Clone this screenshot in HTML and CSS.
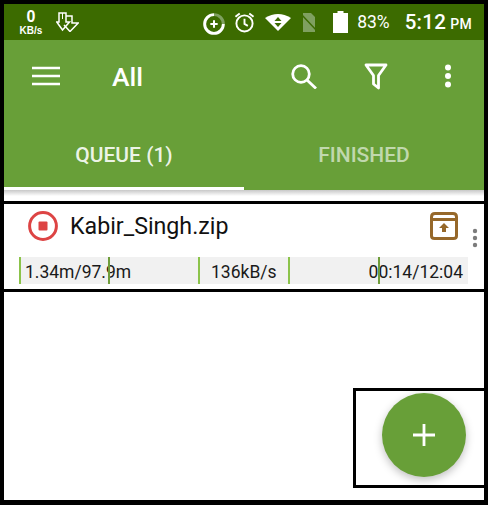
FILE: index.html
```html
<!DOCTYPE html>
<html lang="en">
<head>
<meta charset="utf-8">
<title>Downloads</title>
<link rel="stylesheet" href="styles.css">
</head>
<body>
<div class="frame">
  <header class="status">
    <div class="speed"><b>0</b><small>KB/s</small></div>
    <svg class="ic-dl" viewBox="0 0 23 20"><path d="M3 1h7v9h3.500L6.500 18 .8 10H3z" fill="none" stroke="#fff" stroke-width="1.500"/><path d="M6.500 1v6" stroke="#fff" stroke-width="1"/><path d="M10 4h6v7h6.200L14 19.500 8 13" fill="none" stroke="#fff" stroke-width="1.500"/></svg>
    <div class="status-right">
      <svg class="ic-plus" viewBox="0 0 24 24"><path d="M12 1.800A10.200 10.200 0 0 1 22.200 12" fill="none" stroke="#7fa060" stroke-width="3.200"/><path d="M22.200 12A10.200 10.200 0 1 1 12 1.800" fill="none" stroke="#fff" stroke-width="3.200"/><path d="M12 8v8M8 12h8" stroke="#fff" stroke-width="2.200"/></svg>
      <svg class="ic-alarm" viewBox="1 1.500 22 21"><circle cx="12" cy="13" r="8.500" fill="none" stroke="#fff" stroke-width="2"/><path d="M12 8v5.500l3.500 2M2.500 6 7 2.500M21.500 6 17 2.500" fill="none" stroke="#fff" stroke-width="2"/></svg>
      <svg class="ic-wifi" viewBox="0 0 26 18"><path d="M0 5Q13-3 26 5L13 18z" fill="#fff"/><path d="M13 4l3.500 4h-7zM13 14l-3.500-4h7z" fill="#3c6b00"/></svg>
      <svg class="ic-sim" viewBox="0 0 18 19"><path d="M3 0h8l4 4v15H3z" fill="#7fa060"/><path d="M0 0l18 19" stroke="#3c6b00" stroke-width="1.500"/></svg>
      <svg class="ic-bat" viewBox="0 0 15 22"><path d="M4.500 0h6v2H15v20H0V2h4.500z" fill="#fff"/></svg>
      <span class="pct">83%</span>
      <span class="clock">5:12<small>PM</small></span>
    </div>
  </header>
  <div class="toolbar">
    <svg class="ic-menu" viewBox="0 0 28 20"><path d="M0 2h28M0 10h28M0 18h28" stroke="#fff" stroke-width="2.600"/></svg>
    <span class="title">All</span>
    <svg class="ic-search" viewBox="0 0 26 25"><circle cx="10" cy="10" r="8.300" fill="none" stroke="#fff" stroke-width="2.800"/><path d="M16 16l9 8.500" stroke="#fff" stroke-width="2.800"/></svg>
    <svg class="ic-filter" viewBox="0 0 24 27"><path d="M2 2h20l-7.500 10.500V25L9.500 21V12.500z" fill="none" stroke="#fff" stroke-width="2.800" stroke-linejoin="round"/></svg>
    <svg class="ic-more" viewBox="0 0 8 24"><circle cx="4" cy="3.500" r="3" fill="#fff"/><circle cx="4" cy="12" r="3" fill="#fff"/><circle cx="4" cy="20.500" r="3" fill="#fff"/></svg>
  </div>
  <nav class="tabs">
    <div class="tab active">QUEUE (1)</div>
    <div class="tab">FINISHED</div>
  </nav>
  <div class="shade"></div>
  <section class="item">
    <div class="item-top">
      <svg class="ic-stop" viewBox="0 0 30 30"><circle cx="15" cy="15" r="13.400" fill="none" stroke="#dd4444" stroke-width="3"/><rect x="10.500" y="10.500" width="9" height="9" rx="1" fill="#dd4444"/></svg>
      <span class="name">Kabir_Singh.zip</span>
      <svg class="ic-box" viewBox="0 0 28 28"><path d="M5 1.500h18Q26.500 1.500 26.500 5v19q0 2.500-3 2.500H4.500q-3 0-3-2.500V5Q1.500 1.500 5 1.500zM1.500 7.500h25" fill="none" stroke="#96682a" stroke-width="3"/><path d="M14 11l5 5h-3v4h-4v-4H9z" fill="#96682a"/></svg>
      <svg class="ic-more2" viewBox="0 0 6 20"><circle cx="3" cy="3" r="2.200" fill="#7c7c7c"/><circle cx="3" cy="10" r="2.200" fill="#7c7c7c"/><circle cx="3" cy="17" r="2.200" fill="#7c7c7c"/></svg>
    </div>
    <div class="stats">
      <span class="cell c1">1.34m/97.9m<i class="tick t1"></i></span>
      <span class="cell c2">136kB/s</span>
      <span class="cell c3">00:14/12:04<i class="tick t2"></i></span>
    </div>
  </section>
  <div class="rest">
    <div class="fab-box">
      <button class="fab" type="button"><svg viewBox="0 0 22 22"><path d="M11 0v22M0 11h22" stroke="#fff" stroke-width="2.800"/></svg></button>
    </div>
  </div>
</div>
</body>
</html>
```
FILE: styles.css
```css
* { box-sizing: border-box; }
html, body { margin: 0; padding: 0; background: #000; }
.frame { width: 488px; height: 505px; border: solid #000; border-width: 4px 4px 5px; background: #fff; display: flex; flex-direction: column; font-family: Roboto, sans-serif; overflow: hidden; }
svg { display: block; flex: none; }
.status { height: 36px; background: #3c6b00; display: flex; align-items: center; color: #fff; flex: none; }
.speed { width: 34px; margin-left: 10px; display: flex; flex-direction: column; align-items: center; font-family: "Liberation Sans", sans-serif; }
.speed b { font-size: 16px; line-height: 16px; }
.speed small { font-size: 10px; font-weight: 700; line-height: 11px; }
.ic-dl { width: 23px; height: 20px; margin-left: 8px; }
.status-right { margin-left: auto; display: flex; align-items: center; margin-right: 12px; }
.ic-plus { width: 22px; height: 22px; margin-right: 9px; margin-top: 4px; }
.ic-alarm { width: 21px; height: 21px; margin-right: 10px; }
.ic-wifi { width: 26px; height: 18px; margin-right: 9px; }
.ic-sim { width: 18px; height: 19px; margin-right: 15px; }
.ic-bat { width: 15px; height: 22px; margin-right: 9px; }
.pct { font-size: 17.500px; margin-right: 15px; }
.clock { font-size: 20.500px; font-weight: 500; letter-spacing: .3px; }
.clock small { font-size: 14px; margin-left: 4px; }
.toolbar { height: 84px; background: #689f38; display: flex; align-items: center; flex: none; padding-bottom: 12px; }
.ic-menu { width: 28px; height: 20px; margin-left: 28px; }
.title { color: #fff; font-size: 26.500px; font-weight: 500; margin-left: 52px; }
.ic-search { width: 26px; height: 25px; margin-left: auto; }
.ic-filter { width: 24px; height: 27px; margin-left: 47px; }
.ic-more { width: 8px; height: 24px; margin-left: 56px; margin-right: 32px; }
.tabs { display: flex; height: 66px; background: #689f38; flex: none; }
.tab { flex: 1; text-align: center; padding-top: 19px; font-size: 21px; font-weight: 500; color: rgba(255,255,255,.6); }
.tab.active { color: rgba(255,255,255,.9); border-bottom: 3px solid #fff; }
.shade { height: 14px; flex: none; background: linear-gradient(#c8c8c8, #fff 55%); border-bottom: 3px solid #000; }
.item { height: 88px; flex: none; border-bottom: 3px solid #000; padding-left: 15px; }
.item-top { display: flex; align-items: center; height: 53px; padding-bottom: 10px; }
.ic-stop { width: 30px; height: 30px; margin-left: 9px; }
.name { font-size: 23.200px; margin-left: 12px; color: #111; }
.ic-box { width: 28px; height: 28px; margin-left: auto; margin-right: 14px; }
.ic-more2 { width: 6px; height: 20px; margin-right: 6px; margin-top: 24px; }
.stats { display: flex; width: 449px; height: 27px; background: #f1f1f1; font-size: 17.500px; color: #1a1a1a; }
.cell { height: 100%; display: flex; align-items: center; position: relative; border-left: 2px solid #8bc34a; padding-top: 2px; white-space: nowrap; }
.c1 { width: 179px; padding-left: 4px; }
.c2 { width: 90px; padding-left: 11px; }
.c3 { flex: 1; justify-content: flex-end; padding-right: 5px; }
.tick { position: absolute; top: 0; width: 1.500px; height: 100%; background: #6f9d3a; }
.t1 { left: 87px; }
.t2 { left: 88px; width: 2px; }
.rest { flex: 1; position: relative; }
.fab-box { position: absolute; left: 349px; top: 96px; width: 131px; height: 100px; border: solid #000; border-width: 3px 0 3px 3px; }
.fab { position: absolute; left: 26px; top: 2px; width: 84px; height: 84px; border: 0; padding: 0; border-radius: 50%; background: #689f38; box-shadow: 0 3px 8px rgba(0,0,0,.25); display: flex; align-items: center; justify-content: center; }
.fab svg { width: 22px; height: 22px; }
```
